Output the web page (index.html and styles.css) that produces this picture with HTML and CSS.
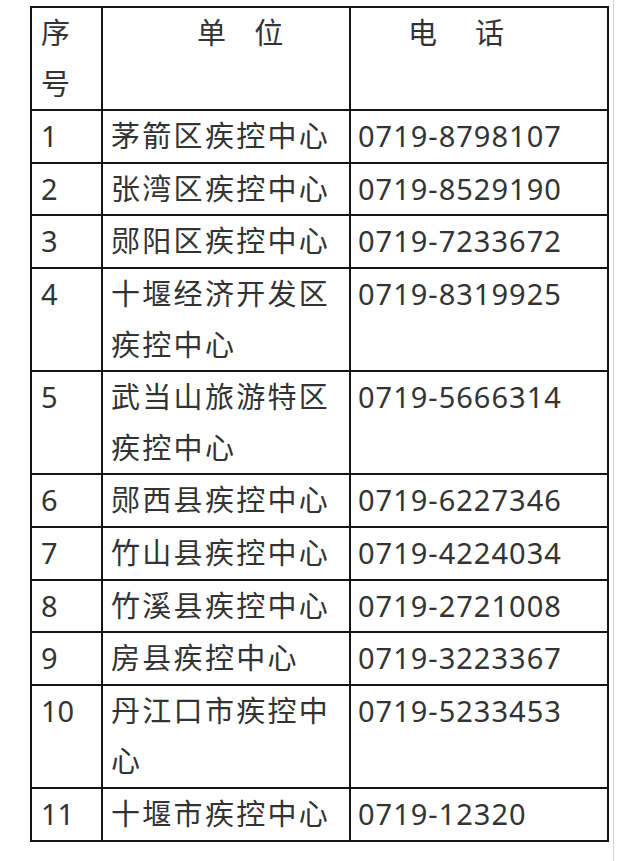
FILE: index.html
```html
<!DOCTYPE html>
<html lang="zh-CN">
<head>
<meta charset="utf-8">
<title>疾控中心电话</title>
<link rel="stylesheet" href="styles.css">
</head>
<body>
<div class="page">
  <table class="tbl">
    <colgroup>
      <col class="c-no">
      <col class="c-unit">
      <col class="c-tel">
    </colgroup>
    <thead>
      <tr>
        <th class="no">序号</th>
        <th class="unit h-unit"><span class="hw">单</span><span class="hw hw-unit">位</span></th>
        <th class="tel h-tel"><span class="hw">电</span><span class="hw hw-tel">话</span></th>
      </tr>
    </thead>
    <tbody>
      <tr><td class="no">1</td><td class="unit">茅箭区疾控中心</td><td class="tel">0719-8798107</td></tr>
      <tr><td class="no">2</td><td class="unit">张湾区疾控中心</td><td class="tel">0719-8529190</td></tr>
      <tr><td class="no">3</td><td class="unit">郧阳区疾控中心</td><td class="tel">0719-7233672</td></tr>
      <tr><td class="no">4</td><td class="unit">十堰经济开发区疾控中心</td><td class="tel">0719-8319925</td></tr>
      <tr><td class="no">5</td><td class="unit">武当山旅游特区疾控中心</td><td class="tel">0719-5666314</td></tr>
      <tr><td class="no">6</td><td class="unit">郧西县疾控中心</td><td class="tel">0719-6227346</td></tr>
      <tr><td class="no">7</td><td class="unit">竹山县疾控中心</td><td class="tel">0719-4224034</td></tr>
      <tr><td class="no">8</td><td class="unit">竹溪县疾控中心</td><td class="tel">0719-2721008</td></tr>
      <tr><td class="no">9</td><td class="unit">房县疾控中心</td><td class="tel">0719-3223367</td></tr>
      <tr><td class="no">10</td><td class="unit">丹江口市疾控中心</td><td class="tel">0719-5233453</td></tr>
      <tr><td class="no">11</td><td class="unit">十堰市疾控中心</td><td class="tel">0719-12320</td></tr>
    </tbody>
  </table>
</div>
</body>
</html>
```

FILE: styles.css
```css
html, body {
  margin: 0;
  padding: 0;
  background: #ffffff;
}

.page {
  box-sizing: border-box;
  width: 614px;
  min-height: 861px;
  padding: 6px 0 0 30px;
  border-right: 1px solid #d6d6d6;
  font-family: "Noto Sans", "Noto Sans CJK SC", sans-serif;
  color: #333333;
}

.tbl {
  border-collapse: collapse;
  table-layout: fixed;
  width: 577px;
  border: 2px solid #151515;
}

.c-no { width: 71px; }
.c-unit { width: 248px; }
.c-tel { width: 258px; }

.tbl th,
.tbl td {
  border: 2px solid #151515;
  padding: 0 6px 0 8px;
  font-size: 29px;
  font-weight: 400;
  line-height: 50.6px;
  text-align: left;
  vertical-align: top;
  overflow: hidden;
}

.tbl .unit {
  letter-spacing: 2.3px;
  padding-left: 8px;
  padding-right: 0;
}

.tbl .tel {
  letter-spacing: 1px;
  padding-left: 7px;
  white-space: nowrap;
}

.tbl .no {
  padding-left: 9px;
}

.tbl .h-unit {
  padding-left: 94px;
}

.tbl .h-tel {
  padding-left: 57px;
}

.hw-unit {
  margin-left: 26px;
}

.hw-tel {
  margin-left: 37px;
}
```
